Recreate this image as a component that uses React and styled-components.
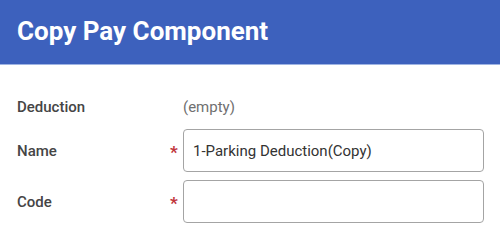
import React from 'react';
import styled, { createGlobalStyle } from 'styled-components';

const GlobalStyle = createGlobalStyle`
  html, body { margin: 0; padding: 0; background: #fff; }
  body { font-family: Roboto, 'Liberation Sans', sans-serif; }
`;

const Page = styled.div`
  width: 500px;
  height: 239px;
  overflow: hidden;
  background: #fff;
`;

const Header = styled.div`
  height: 65px;
  box-sizing: border-box;
  padding: 0 17px;
  display: flex;
  align-items: center;
  background: #3d61bd;
  border-bottom: 1px solid #9fb4e3;
`;

const Title = styled.h1`
  margin: 0 0 3px;
  font-size: 26px;
  font-weight: 700;
  color: #fff;
`;

const Form = styled.div`
  display: grid;
  grid-template-columns: 150px 16px 301px;
  row-gap: 8px;
  padding: 27px 0 0 17px;
  align-items: center;
`;

const Label = styled.div`
  font-size: 15px;
  font-weight: 500;
  color: #454545;
  height: ${p => (p.$tall ? '43px' : '29px')};
  display: flex;
  align-items: center;
`;

const Required = styled.span`
  color: #c0353a;
  font-size: 17px;
  font-weight: 700;
  justify-self: start;
  padding-left: 3px;
  padding-top: 3px;
`;

const Value = styled.div`
  font-size: 15px;
  color: #707070;
`;

const Input = styled.div`
  height: 43px;
  box-sizing: border-box;
  border: 1px solid #a4a4a4;
  border-radius: 4px;
  padding: 0 9px;
  display: flex;
  align-items: center;
  font-size: 15px;
  color: #333;
`;

const App = () => (
  <Page>
    <GlobalStyle />
    <Header>
      <Title>Copy Pay Component</Title>
    </Header>
    <Form>
      <Label>Deduction</Label>
      <span />
      <Value>(empty)</Value>
      <Label $tall>Name</Label>
      <Required>*</Required>
      <Input>1-Parking Deduction(Copy)</Input>
      <Label $tall>Code</Label>
      <Required>*</Required>
      <Input />
    </Form>
  </Page>
);

export default App;
